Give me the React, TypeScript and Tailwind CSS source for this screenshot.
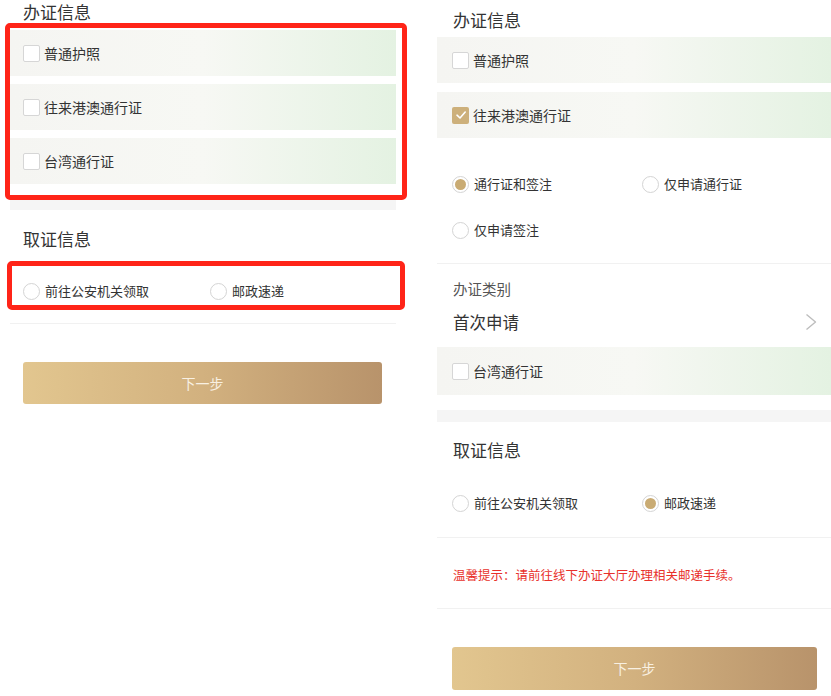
/**
 * 办证信息 / 取证信息 — two mobile form states side by side
 */

const FONT = "font-['Noto_Sans_CJK_SC','Noto_Sans',sans-serif]";

function CheckBox({ checked = false }: { checked?: boolean }) {
  if (checked) {
    return (
      <span className="w-[17px] h-[17px] rounded-[2px] bg-[#cdb07b] flex items-center justify-center shrink-0">
        <svg width="12" height="12" viewBox="0 0 12 12" fill="none">
          <polyline points="2,6.2 5,9 10.2,3" stroke="#fff" strokeWidth="1.6" strokeLinecap="round" strokeLinejoin="round" />
        </svg>
      </span>
    );
  }
  return <span className="w-[17px] h-[17px] rounded-[2px] border border-[#d6d6d6] bg-white shrink-0" />;
}

function Radio({ checked = false }: { checked?: boolean }) {
  return (
    <span className="w-[17px] h-[17px] rounded-full border border-[#d4d4d4] bg-white flex items-center justify-center shrink-0">
      {checked && <span className="w-[11px] h-[11px] rounded-full bg-[#c9ab73]" />}
    </span>
  );
}

function CheckRow({ label, checked, pad }: { label: string; checked?: boolean; pad: string }) {
  return (
    <div className={`h-[46px] flex items-center gap-[4px] bg-gradient-to-r from-[#f5f5f2] via-[#f7f8f4] to-[#e4f2e2] ${pad}`}>
      <CheckBox checked={checked} />
      <span className="text-[14px] text-[#333]">{label}</span>
    </div>
  );
}

function RadioItem({ label, checked, width }: { label: string; checked?: boolean; width: string }) {
  return (
    <div className={`flex items-center gap-[5px] ${width}`}>
      <Radio checked={checked} />
      <span className="text-[13px] text-[#333]">{label}</span>
    </div>
  );
}

function NextButton({ className }: { className: string }) {
  return (
    <div
      className={`rounded-[3px] bg-gradient-to-r from-[#e2c68f] via-[#d2b17f] to-[#b8936b] flex items-center justify-center text-[14px] text-[#f8f0e2] ${className}`}
    >
      下一步
    </div>
  );
}

function LeftPanel() {
  return (
    <div className="relative w-[410px] h-full shrink-0">
      <div className="h-[24px] pl-[23px] flex items-center text-[17px] text-[#333]">办证信息</div>

      <div className="mt-[6px] ml-[10px] w-[386px] flex flex-col gap-[8px]">
        <CheckRow label="普通护照" pad="pl-[13px]" />
        <CheckRow label="往来港澳通行证" pad="pl-[13px]" />
        <CheckRow label="台湾通行证" pad="pl-[13px]" />
      </div>
      <div className="mt-[12px] ml-[10px] w-[386px] h-[14px] bg-[#f5f5f5]" />

      <div className="h-[57px] pl-[23px] flex items-center text-[17px] text-[#333]">取证信息</div>
      <div className="h-[48px] pl-[23px] flex items-center">
        <RadioItem label="前往公安机关领取" width="w-[187px]" />
        <RadioItem label="邮政速递" width="w-[150px]" />
      </div>
      <div className="mt-[8px] ml-[10px] w-[386px] h-px bg-[#f1f1f1]" />

      <NextButton className="mt-[38px] ml-[23px] w-[359px] h-[42px]" />

      {/* annotation boxes */}
      <div className="absolute left-[5px] top-[23px] w-[402px] h-[177px] border-[5px] border-[#ff2418] rounded-[5px]" />
      <div className="absolute left-[7px] top-[261px] w-[398px] h-[49px] border-[5px] border-[#ff2418] rounded-[5px]" />
    </div>
  );
}

function RightPanel() {
  return (
    <div className="ml-[27px] w-[394px] h-full shrink-0">
      <div className="h-[37px] pt-[3px] pl-[16px] flex items-center text-[17px] text-[#333]">办证信息</div>

      <div className="flex flex-col gap-[9px]">
        <CheckRow label="普通护照" pad="pl-[15px]" />
        <CheckRow label="往来港澳通行证" pad="pl-[15px]" checked />
      </div>

      <div className="mt-[23px] pl-[15px]">
        <div className="h-[46px] flex items-center">
          <RadioItem label="通行证和签注" checked width="w-[190px]" />
          <RadioItem label="仅申请通行证" width="w-[150px]" />
        </div>
        <div className="h-[46px] flex items-center">
          <RadioItem label="仅申请签注" width="w-[190px]" />
        </div>
      </div>
      <div className="mt-[10px] h-px bg-[#f1f1f1]" />

      <div className="mt-[12px] h-[26px] pl-[16px] flex items-center text-[14.5px] text-[#555]">办证类别</div>
      <div className="h-[40px] pl-[16px] pr-[14px] flex items-center justify-between">
        <span className="text-[16.5px] text-[#333]">首次申请</span>
        <svg width="12" height="18" viewBox="0 0 12 18" fill="none">
          <polyline points="1.5,1.5 10.5,9 1.5,16.5" stroke="#bdbdbd" strokeWidth="1.4" strokeLinejoin="round" />
        </svg>
      </div>
      <div className="mt-[5px] h-[48px] flex items-center gap-[4px] pl-[15px] bg-gradient-to-r from-[#f5f5f2] via-[#f7f8f4] to-[#e4f2e2]">
        <CheckBox />
        <span className="text-[14px] text-[#333]">台湾通行证</span>
      </div>
      <div className="mt-[15px] h-[12px] bg-[#f5f5f5]" />

      <div className="h-[56px] pl-[16px] flex items-center text-[17px] text-[#333]">取证信息</div>
      <div className="h-[50px] pl-[15px] flex items-center">
        <RadioItem label="前往公安机关领取" width="w-[190px]" />
        <RadioItem label="邮政速递" checked width="w-[150px]" />
      </div>
      <div className="mt-[9px] h-px bg-[#f1f1f1]" />

      <div className="h-[70px] pt-[4px] pl-[16px] flex items-center text-[12.5px] text-[#e8312b]">
        温馨提示：请前往线下办证大厅办理相关邮递手续。
      </div>
      <div className="h-px bg-[#f1f1f1]" />

      <NextButton className="mt-[38px] ml-[15px] w-[365px] h-[43px]" />
    </div>
  );
}

export default function App() {
  return (
    <div className={`w-[831px] h-[696px] bg-white flex overflow-hidden ${FONT}`}>
      <LeftPanel />
      <RightPanel />
    </div>
  );
}
